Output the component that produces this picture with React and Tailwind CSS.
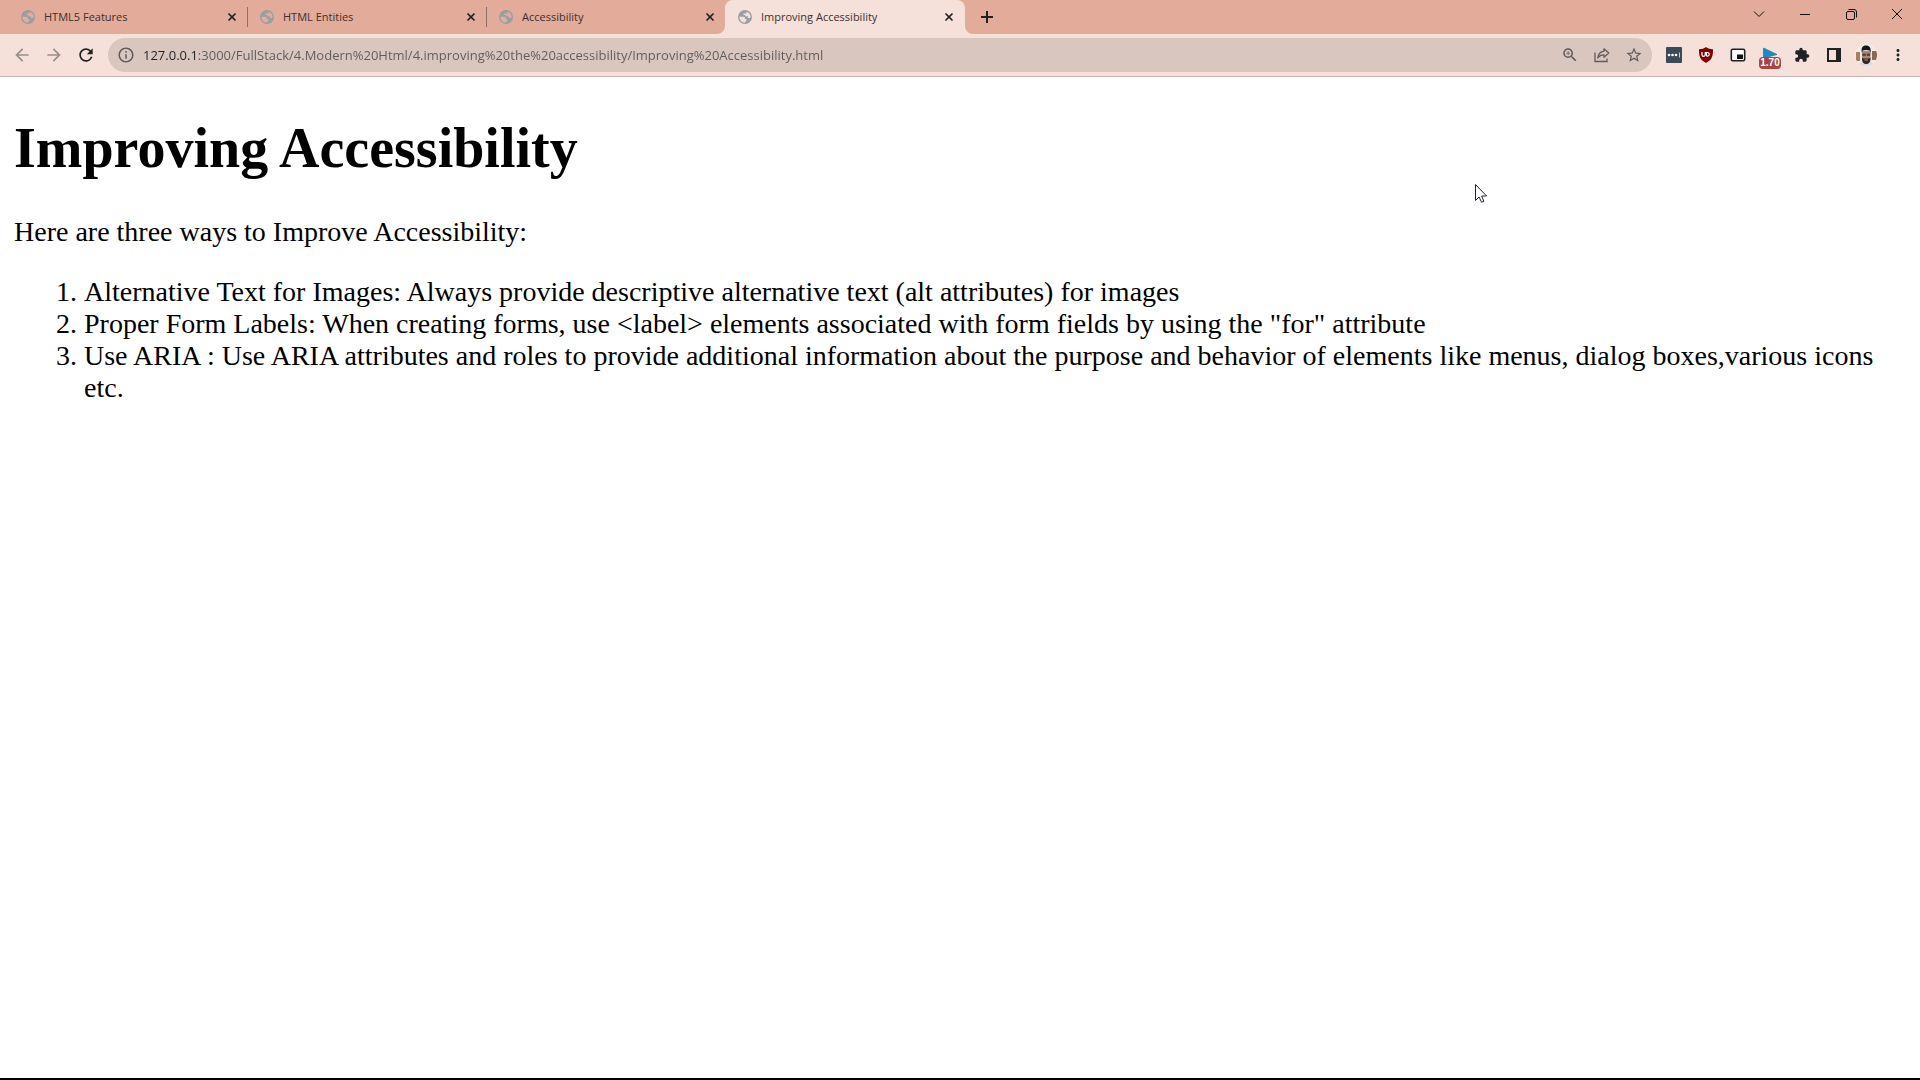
import { LuX } from "react-icons/lu";
import {
  MdArrowBack,
  MdArrowForward,
  MdRefresh,
  MdOutlineInfo,
  MdStarBorder,
  MdOutlineZoomIn,
  MdExtension,
  MdMoreVert,
} from "react-icons/md";

const tabs = [
  { title: "HTML5 Features" },
  { title: "HTML Entities" },
  { title: "Accessibility" },
  { title: "Improving Accessibility", active: true },
];

function Globe() {
  return (
    <svg viewBox="0 0 14 14" className="size-[14px] shrink-0" aria-hidden="true">
      <circle cx="7" cy="7" r="7" fill="#989ea4" />
      <path
        d="M1.300 6.700H5.500Q7 6.700 7 8.200v.9h1.400v1.300L7 12.600C4 12.800 1.500 10.200 1.300 6.700ZM8.600 1.700C11 2.300 12.600 4.500 12.700 7l-.9.900H9.900V6.300H7.200V5H5.400V3.600h2.400q.8 0 .8-.9Z"
        fill="currentColor"
      />
    </svg>
  );
}

function TabFoot({ side }) {
  return (
    <svg
      viewBox="0 0 8 8"
      aria-hidden="true"
      className={side === "left" ? "absolute bottom-0 right-full size-2" : "absolute bottom-0 left-full size-2"}
    >
      <path d={side === "left" ? "M8 0v8H0a8 8 0 0 0 8-8Z" : "M0 0v8h8a8 8 0 0 1-8-8Z"} fill="#f5e1da" />
    </svg>
  );
}

function Tab({ title, active, divider }) {
  return (
    <div
      className={
        active
          ? "relative flex h-full w-[240px] items-center rounded-t-lg bg-[#f5e1da] pl-[13px] pr-2 text-[#f5e1da]"
          : "relative flex h-full w-[239px] items-center pl-[13px] pr-[7px] text-[#e3ab9a]"
      }
    >
      {active && <TabFoot side="left" />}
      <Globe />
      <button className="ml-[9px] flex-1 truncate text-left text-[11px] leading-4 text-[#3c2f2d]">{title}</button>
      <button aria-label={"Close " + title} className="flex size-4 items-center justify-center text-[#202124]">
        <LuX className="size-3" strokeWidth={3.5} />
      </button>
      {active && <TabFoot side="right" />}
      {divider && <span className="absolute -right-px top-[7px] h-5 w-px bg-[#8f6f66]" />}
    </div>
  );
}

function Tool({ label, children }) {
  return (
    <button aria-label={label} className="flex size-8 items-center justify-center text-[#202124]">
      {children}
    </button>
  );
}

function WindowButton({ label, d }) {
  return (
    <button aria-label={label} className="flex h-7 w-[46px] items-center justify-center">
      <svg viewBox="0 0 12 12" className="size-3" fill="none" stroke="#111" aria-hidden="true">
        <path d={d} />
      </svg>
    </button>
  );
}

function TabStrip() {
  return (
    <header className="flex h-[34px] bg-[#e3ab9a] pl-2">
      <nav aria-label="Tabs" className="flex h-full">
        {tabs.map((t, i) => (
          <Tab key={t.title} {...t} divider={i < 2} />
        ))}
      </nav>
      <button aria-label="New tab" className="ml-2 flex h-full w-7 items-center justify-center text-[#202124]">
        <svg viewBox="0 0 12 12" className="size-3" stroke="currentColor" strokeWidth="2" aria-hidden="true">
          <path d="M6 0v12M0 6h12" />
        </svg>
      </button>
      <div className="ml-auto flex">
        <WindowButton label="Search tabs" d="M1 3.500 6 8.500l5-5" />
        <WindowButton label="Minimize" d="M1 6.500h10" />
        <WindowButton label="Restore" d="M3 3.500h5q1.500 0 1.500 1.500v5q0 1.500-1.500 1.500H3q-1.500 0-1.500-1.500V5q0-1.500 1.500-1.500ZM3.500 1.500H9q2.500 0 2.500 2.500v5.500" />
        <WindowButton label="Close" d="m1 1 10 10M11 1 1 11" />
      </div>
    </header>
  );
}

function AddressBar() {
  return (
    <div className="flex h-[34px] flex-1 items-center rounded-full bg-[#d8c6bf] pl-[9px] pr-0.5 text-[#5f5b5a]">
      <MdOutlineInfo className="size-[18px] shrink-0" />
      <input
        aria-label="Address"
        defaultValue="127.0.0.1:3000/FullStack/4.Modern%20Html/4.improving%20the%20accessibility/Improving%20Accessibility.html"
        className="ml-2 h-6 min-w-0 flex-1 bg-[linear-gradient(90deg,#202124_55px,#5f5b5a_55px)] bg-clip-text text-[13px] text-transparent outline-none"
      />
      <button aria-label="Zoom" className="flex size-8 items-center justify-center">
        <MdOutlineZoomIn className="size-[18px]" />
      </button>
      <button aria-label="Share this page" className="flex size-8 items-center justify-center">
        <svg viewBox="0 0 16 16" className="size-4" fill="none" stroke="currentColor" strokeWidth="1.300" aria-hidden="true">
          <path d="M1 5.500v9h12v-3" />
          <path d="M10 1.800 14.800 6 10 10.200V7.800C7.300 7.800 5.300 8.700 3.800 11c.4-3.600 2.500-6.300 6.200-6.800V1.800Z" strokeLinejoin="round" />
        </svg>
      </button>
      <button aria-label="Bookmark this tab" className="flex size-8 items-center justify-center">
        <MdStarBorder className="size-[18px]" />
      </button>
    </div>
  );
}

function Toolbar() {
  return (
    <div className="flex h-[43px] items-center border-b border-[#c6b4b0] bg-[#f5e1da] pl-1.5 pr-1.5">
      <div className="mr-1.5 flex">
        <button aria-label="Back" className="flex size-8 items-center justify-center text-[#9b8e8b]">
          <MdArrowBack className="size-5" />
        </button>
        <button aria-label="Forward" className="flex size-8 items-center justify-center text-[#9b8e8b]">
          <MdArrowForward className="size-5" />
        </button>
        <Tool label="Reload">
          <MdRefresh className="size-5" />
        </Tool>
      </div>
      <AddressBar />
      <div className="ml-1.5 flex">
        <Tool label="Password manager">
          <svg viewBox="0 0 16 16" className="size-4" aria-hidden="true">
            <rect width="16" height="16" rx="1" fill="#3a4a56" />
            <circle cx="3" cy="8" r="1.300" fill="#fff" />
            <circle cx="6.500" cy="8" r="1.300" fill="#fff" />
            <circle cx="10" cy="8" r="1.300" fill="#fff" />
            <path d="M13.500 5.500v5" stroke="#c5ccd1" />
          </svg>
        </Tool>
        <Tool label="Content blocker">
          <svg viewBox="0 0 16 16" className="size-4" aria-hidden="true">
            <path d="M8 0c2 1.500 4 2.200 7 2.300 0 6-.3 10.200-7 13.700C1.300 12.500 1 8.300 1 2.300 4 2.200 6 1.500 8 0Z" fill="#800000" />
            <path d="M4 5v2.800a1.500 1.500 0 0 0 3.200 0V5M8.500 9V5.500h1.300a1.900 1.900 0 0 1 0 3.700H8.500" fill="none" stroke="#fff" strokeWidth="1.200" />
          </svg>
        </Tool>
        <Tool label="Picture in picture">
          <svg viewBox="0 0 16 16" className="size-4" aria-hidden="true">
            <rect x="1.300" y="2.300" width="13.400" height="11.400" rx="1.500" fill="#fff" stroke="#202124" strokeWidth="1.600" />
            <path d="M7 7.500h6v4.500H7z" fill="#111" />
          </svg>
        </Tool>
        <button aria-label="Video speed 1.70" className="relative flex size-8 items-center justify-center">
          <svg viewBox="0 0 16 16" className="size-4" aria-hidden="true">
            <path d="M1.500 1v10L15 7.500Z" fill="#168fc7" stroke="#2b6b8c" strokeWidth=".7" />
          </svg>
          <span className="absolute bottom-0.5 left-[5px] flex h-3 w-[22px] items-center justify-center rounded-sm bg-[#a94442] font-['Liberation_Sans'] text-[10px] font-bold leading-3 text-white">
            1.70
          </span>
        </button>
        <Tool label="Extensions">
          <MdExtension className="size-4" />
        </Tool>
        <Tool label="Side panel">
          <svg viewBox="0 0 14 14" className="size-[14px]" aria-hidden="true">
            <path d="M1 1h12v12H1z" fill="none" stroke="#202124" strokeWidth="2" />
            <path d="M9 1h4v12H9z" fill="#202124" />
          </svg>
        </Tool>
        <Tool label="Profile">
          <svg viewBox="0 0 22 22" className="size-[22px] shrink-0 rounded-full" aria-hidden="true">
            <rect width="22" height="22" fill="#f1ece8" />
            <path d="M1 8h4v9H1z" fill="#a77f60" />
            <path d="M17 7h5v9h-5z" fill="#8b6a53" />
            <path d="M3 22c1-4 4-5 8-5s7 1 8 5Z" fill="#d9dbe0" />
            <path d="M7 7h8.500v8c0 3-2 5-4.300 5S7 18 7 15Z" fill="#b98265" />
            <path d="M6.800 8.500C6 4 7.500 1.500 11 1.500s5.200 2.500 4.700 7l-1-2-3.500-.5-3.500.5Z" fill="#15151b" />
            <path d="M7 13.500c1.300 1.500 2.700 1 4.200 1s3 .5 4.300-1V15c0 3-2 5-4.300 5S7 18 7 15Z" fill="#332629" />
            <path d="M7 9.500h3.800v2.500H7.500Zm4.600 0h3.900l-.6 2.500h-3Z" fill="#34506c" />
            <path d="M9.500 16h3.500" stroke="#c08c70" />
          </svg>
        </Tool>
        <Tool label="Menu">
          <MdMoreVert className="size-[18px]" />
        </Tool>
      </div>
    </div>
  );
}

export default function App() {
  return (
    <div className="relative flex min-h-screen flex-col bg-white font-['Open_Sans',sans-serif]">
      <TabStrip />
      <Toolbar />
      <main className="flex-1 px-[14px] font-['Liberation_Serif',serif] text-[28px] leading-8 text-black">
        <h1 className="mt-[39px] text-[56px] font-bold leading-16">Improving Accessibility</h1>
        <p className="mt-9">Here are three ways to Improve Accessibility:</p>
        <ol className="mt-7 list-decimal pl-[70px]">
          <li>Alternative Text for Images: Always provide descriptive alternative text (alt attributes) for images</li>
          <li>Proper Form Labels: When creating forms, use &lt;label&gt; elements associated with form fields by using the "for" attribute</li>
          <li>
            Use ARIA : Use ARIA attributes and roles to provide additional information about the purpose and behavior of
            elements like menus, dialog boxes,various icons etc.
          </li>
        </ol>
      </main>
      <footer className="h-0.5 bg-black" />
      <svg viewBox="0 0 12 19" className="absolute left-[1475px] top-[184px] h-[19px] w-3" aria-hidden="true">
        <path d="M.5.5v16l3.600-3.500 2.500 5.300 2.300-1L6.600 12h5Z" fill="#fff" stroke="#223" />
      </svg>
    </div>
  );
}
